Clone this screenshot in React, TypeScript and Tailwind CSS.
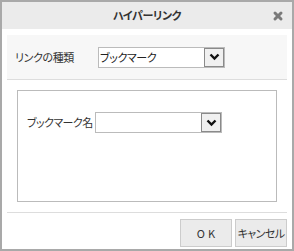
import { X } from "lucide-react";

function Chevron() {
  return (
    <svg width="11" height="8" viewBox="0 0 11 8">
      <path d="M1.5 1.5 L5.5 5.5 L9.5 1.5" fill="none" stroke="#111" strokeWidth="2.4" />
    </svg>
  );
}

function Select({ value }: { value?: string }) {
  return (
    <div className="flex w-[127px] h-[21px] items-stretch border border-[#bbb] bg-white">
      <div className="flex-1 flex items-center pl-[1px] text-[11px] tracking-[-0.4px] leading-none text-[#222] overflow-hidden whitespace-nowrap">
        {value}
      </div>
      <div className="w-[20px] flex items-center justify-center border border-[#8a8a8a] bg-[#f0f0f0]">
        <Chevron />
      </div>
    </div>
  );
}

export default function App() {
  return (
    <div className="w-[294px] h-[251px] flex flex-col border-2 border-[#a9a9a9] bg-white text-[#333] font-['Noto_Sans_CJK_JP',sans-serif] [font-feature-settings:'palt']">
      <div className="h-[27px] shrink-0 flex items-center bg-[#ebebeb]">
        <div className="w-[30px]" />
        <div className="flex-1 text-center text-[11px] font-bold tracking-[-0.4px]">ハイパーリンク</div>
        <div className="w-[30px] flex justify-center pl-[2px]">
          <X className="w-[12px] h-[12px] text-[#7a7a7a]" strokeWidth={6} />
        </div>
      </div>

      <div className="flex-1 flex flex-col px-[5px] pt-[6px]">
        <div className="h-[45px] shrink-0 flex items-center pl-[8px] bg-[#f7f7f7] border-b border-[#ddd]">
          <div className="w-[83px] text-[11px] tracking-[-0.4px]">リンクの種類</div>
          <Select value="ブックマーク" />
        </div>

        <div className="p-[10px]">
          <div className="h-[112px] border border-[#bbb] flex items-start pl-[9px] pt-[21px]">
            <div className="w-[68px] h-[21px] flex items-center text-[11px] tracking-[-0.6px] whitespace-nowrap">ブックマーク名</div>
            <Select />
          </div>
        </div>

        <div className="flex justify-end gap-[3px] pt-[6px] border-t border-[#ddd]">
          <button className="w-[52px] h-[28px] bg-[#ebebeb] border border-[#ccc] text-[11px] tracking-[3px] pl-[3px] text-[#333]">
            OK
          </button>
          <button className="w-[52px] h-[28px] bg-[#ebebeb] border border-[#ccc] text-[11px] text-[#333] tracking-[-0.6px] whitespace-nowrap">
            キャンセル
          </button>
        </div>
      </div>
    </div>
  );
}
